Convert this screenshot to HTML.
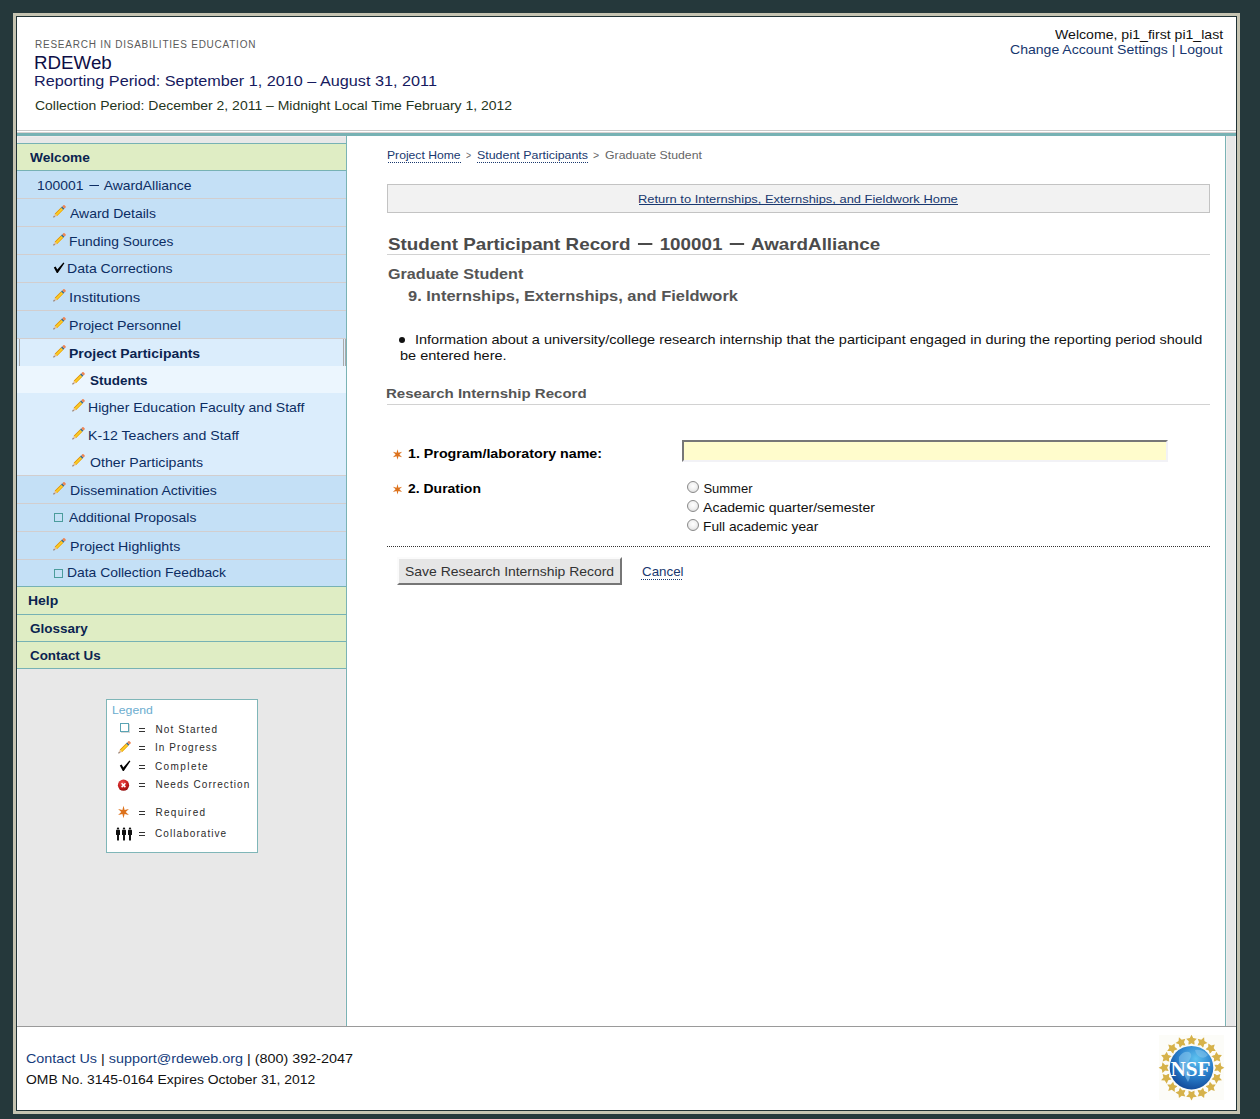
<!DOCTYPE html>
<html><head><meta charset="utf-8"><title>RDEWeb</title><style>
*{margin:0;padding:0;box-sizing:border-box}
html,body{width:1260px;height:1119px;overflow:hidden;background:#25383b;font-family:"Liberation Sans",sans-serif}
.abs{position:absolute}
.t{position:absolute;white-space:nowrap;line-height:1}
.ic{position:absolute;overflow:visible}
.md{display:inline-block;background:currentColor}
.sq{position:absolute;width:9px;height:9px;border:1px solid #4b9c9c}
</style></head>
<body>
<div class="abs" style="left:13px;top:13px;width:1227px;height:1101px;background:#c5c3b1"></div>
<div class="abs" style="left:16px;top:16px;width:1221px;height:1095px;background:#203236"></div>
<div class="abs" style="left:17px;top:17px;width:1219px;height:1093px;background:#fff"></div>
<div class="abs" style="left:17px;top:130px;width:1219px;height:1px;background:#c9c9c9"></div>
<div class="abs" style="left:17px;top:132px;width:1219px;height:1px;background:#d9d2d2"></div>
<div class="abs" style="left:17px;top:133px;width:1219px;height:3px;background:#77b2b4"></div>
<div class="abs" style="left:17px;top:136px;width:329px;height:890px;background:#e8e8e8"></div>
<div class="abs" style="left:17px;top:136px;width:1px;height:890px;background:#f3f3f3"></div>
<div class="abs" style="left:346px;top:136px;width:1px;height:890px;background:#7ab3b5"></div>
<div class="abs" style="left:345px;top:669px;width:1px;height:357px;background:#f0eaea"></div>
<div class="abs" style="left:17px;top:136px;width:329px;height:1px;background:#f1eded"></div>
<div class="abs" style="left:1225px;top:136px;width:1px;height:890px;background:#7ab3b5"></div>
<div class="abs" style="left:1226px;top:136px;width:10px;height:890px;background:#e8e8e8"></div>
<div class="abs" style="left:1226px;top:136px;width:1px;height:890px;background:#f1eeee"></div>
<div class="abs" style="left:1235px;top:136px;width:1px;height:890px;background:#f4f2f2"></div>
<div class="abs" style="left:17px;top:1026px;width:1219px;height:1px;background:#9a9a9a"></div>
<div class="abs" style="left:17px;top:143px;width:329px;height:1px;background:#77b2b4"></div>
<div class="abs" style="left:17px;top:144px;width:329px;height:26px;background:#dfedc4"></div>
<div class="abs" style="left:17px;top:170px;width:329px;height:1px;background:#77b2b4"></div>
<div class="abs" style="left:17px;top:171px;width:329px;height:415px;background:#c4e0f6"></div>
<div class="abs" style="left:17px;top:198px;width:329px;height:1px;background:#d2cece"></div>
<div class="abs" style="left:17px;top:226px;width:329px;height:1px;background:#d2cece"></div>
<div class="abs" style="left:17px;top:254px;width:329px;height:1px;background:#d2cece"></div>
<div class="abs" style="left:17px;top:282px;width:329px;height:1px;background:#d2cece"></div>
<div class="abs" style="left:17px;top:310px;width:329px;height:1px;background:#d2cece"></div>
<div class="abs" style="left:17px;top:338px;width:329px;height:1px;background:#d2cece"></div>
<div class="abs" style="left:17px;top:475px;width:329px;height:1px;background:#d2cece"></div>
<div class="abs" style="left:17px;top:503px;width:329px;height:1px;background:#d2cece"></div>
<div class="abs" style="left:17px;top:531px;width:329px;height:1px;background:#d2cece"></div>
<div class="abs" style="left:17px;top:559px;width:329px;height:1px;background:#d2cece"></div>
<div class="abs" style="left:17px;top:339px;width:329px;height:27px;background:#dbedfc"></div>
<div class="abs" style="left:17px;top:366px;width:329px;height:27px;background:#ecf6fe"></div>
<div class="abs" style="left:17px;top:393px;width:329px;height:82px;background:#dbedfc"></div>
<div class="abs" style="left:19px;top:339px;width:1px;height:27px;background:#a9a9a9"></div>
<div class="abs" style="left:343px;top:339px;width:1px;height:27px;background:#a9a9a9"></div>
<div class="abs" style="left:345px;top:339px;width:1px;height:27px;background:#a9a9a9"></div>
<div class="abs" style="left:17px;top:586px;width:329px;height:1px;background:#77b2b4"></div>
<div class="abs" style="left:17px;top:587px;width:329px;height:27px;background:#dfedc4"></div>
<div class="abs" style="left:17px;top:614px;width:329px;height:1px;background:#77b2b4"></div>
<div class="abs" style="left:17px;top:615px;width:329px;height:26px;background:#dfedc4"></div>
<div class="abs" style="left:17px;top:641px;width:329px;height:1px;background:#77b2b4"></div>
<div class="abs" style="left:17px;top:642px;width:329px;height:26px;background:#dfedc4"></div>
<div class="abs" style="left:17px;top:668px;width:329px;height:1px;background:#77b2b4"></div>
<svg class="ic" style="left:53px;top:205px" width="14" height="14" viewBox="0 0 14 14"><g transform="translate(6.5 6.3) rotate(-45)">
<polygon points="-8.6,0 -5.0,-1.6 -5.0,1.6" fill="#e3b99c"/><polygon points="-8.8,0 -7.2,-0.8 -7.2,0.8" fill="#6b5e56"/>
<rect x="-5.0" y="-1.6" width="8.8" height="3.2" fill="#fbd126"/><rect x="-5.0" y="-1.6" width="8.8" height="0.9" fill="#df8a12"/><rect x="-5.0" y="0.9" width="8.8" height="0.7" fill="#e9a01c"/>
<rect x="3.8" y="-1.6" width="1.6" height="3.2" fill="#3e6e88"/><rect x="5.4" y="-1.6" width="2.5" height="3.2" rx="0.9" fill="#ee8454"/>
</g></svg>
<svg class="ic" style="left:53px;top:233px" width="14" height="14" viewBox="0 0 14 14"><g transform="translate(6.5 6.3) rotate(-45)">
<polygon points="-8.6,0 -5.0,-1.6 -5.0,1.6" fill="#e3b99c"/><polygon points="-8.8,0 -7.2,-0.8 -7.2,0.8" fill="#6b5e56"/>
<rect x="-5.0" y="-1.6" width="8.8" height="3.2" fill="#fbd126"/><rect x="-5.0" y="-1.6" width="8.8" height="0.9" fill="#df8a12"/><rect x="-5.0" y="0.9" width="8.8" height="0.7" fill="#e9a01c"/>
<rect x="3.8" y="-1.6" width="1.6" height="3.2" fill="#3e6e88"/><rect x="5.4" y="-1.6" width="2.5" height="3.2" rx="0.9" fill="#ee8454"/>
</g></svg>
<svg class="ic" style="left:53px;top:289px" width="14" height="14" viewBox="0 0 14 14"><g transform="translate(6.5 6.3) rotate(-45)">
<polygon points="-8.6,0 -5.0,-1.6 -5.0,1.6" fill="#e3b99c"/><polygon points="-8.8,0 -7.2,-0.8 -7.2,0.8" fill="#6b5e56"/>
<rect x="-5.0" y="-1.6" width="8.8" height="3.2" fill="#fbd126"/><rect x="-5.0" y="-1.6" width="8.8" height="0.9" fill="#df8a12"/><rect x="-5.0" y="0.9" width="8.8" height="0.7" fill="#e9a01c"/>
<rect x="3.8" y="-1.6" width="1.6" height="3.2" fill="#3e6e88"/><rect x="5.4" y="-1.6" width="2.5" height="3.2" rx="0.9" fill="#ee8454"/>
</g></svg>
<svg class="ic" style="left:53px;top:317px" width="14" height="14" viewBox="0 0 14 14"><g transform="translate(6.5 6.3) rotate(-45)">
<polygon points="-8.6,0 -5.0,-1.6 -5.0,1.6" fill="#e3b99c"/><polygon points="-8.8,0 -7.2,-0.8 -7.2,0.8" fill="#6b5e56"/>
<rect x="-5.0" y="-1.6" width="8.8" height="3.2" fill="#fbd126"/><rect x="-5.0" y="-1.6" width="8.8" height="0.9" fill="#df8a12"/><rect x="-5.0" y="0.9" width="8.8" height="0.7" fill="#e9a01c"/>
<rect x="3.8" y="-1.6" width="1.6" height="3.2" fill="#3e6e88"/><rect x="5.4" y="-1.6" width="2.5" height="3.2" rx="0.9" fill="#ee8454"/>
</g></svg>
<svg class="ic" style="left:53px;top:345px" width="14" height="14" viewBox="0 0 14 14"><g transform="translate(6.5 6.3) rotate(-45)">
<polygon points="-8.6,0 -5.0,-1.6 -5.0,1.6" fill="#e3b99c"/><polygon points="-8.8,0 -7.2,-0.8 -7.2,0.8" fill="#6b5e56"/>
<rect x="-5.0" y="-1.6" width="8.8" height="3.2" fill="#fbd126"/><rect x="-5.0" y="-1.6" width="8.8" height="0.9" fill="#df8a12"/><rect x="-5.0" y="0.9" width="8.8" height="0.7" fill="#e9a01c"/>
<rect x="3.8" y="-1.6" width="1.6" height="3.2" fill="#3e6e88"/><rect x="5.4" y="-1.6" width="2.5" height="3.2" rx="0.9" fill="#ee8454"/>
</g></svg>
<svg class="ic" style="left:72px;top:372px" width="14" height="14" viewBox="0 0 14 14"><g transform="translate(6.5 6.3) rotate(-45)">
<polygon points="-8.6,0 -5.0,-1.6 -5.0,1.6" fill="#e3b99c"/><polygon points="-8.8,0 -7.2,-0.8 -7.2,0.8" fill="#6b5e56"/>
<rect x="-5.0" y="-1.6" width="8.8" height="3.2" fill="#fbd126"/><rect x="-5.0" y="-1.6" width="8.8" height="0.9" fill="#df8a12"/><rect x="-5.0" y="0.9" width="8.8" height="0.7" fill="#e9a01c"/>
<rect x="3.8" y="-1.6" width="1.6" height="3.2" fill="#3e6e88"/><rect x="5.4" y="-1.6" width="2.5" height="3.2" rx="0.9" fill="#ee8454"/>
</g></svg>
<svg class="ic" style="left:72px;top:399px" width="14" height="14" viewBox="0 0 14 14"><g transform="translate(6.5 6.3) rotate(-45)">
<polygon points="-8.6,0 -5.0,-1.6 -5.0,1.6" fill="#e3b99c"/><polygon points="-8.8,0 -7.2,-0.8 -7.2,0.8" fill="#6b5e56"/>
<rect x="-5.0" y="-1.6" width="8.8" height="3.2" fill="#fbd126"/><rect x="-5.0" y="-1.6" width="8.8" height="0.9" fill="#df8a12"/><rect x="-5.0" y="0.9" width="8.8" height="0.7" fill="#e9a01c"/>
<rect x="3.8" y="-1.6" width="1.6" height="3.2" fill="#3e6e88"/><rect x="5.4" y="-1.6" width="2.5" height="3.2" rx="0.9" fill="#ee8454"/>
</g></svg>
<svg class="ic" style="left:72px;top:427px" width="14" height="14" viewBox="0 0 14 14"><g transform="translate(6.5 6.3) rotate(-45)">
<polygon points="-8.6,0 -5.0,-1.6 -5.0,1.6" fill="#e3b99c"/><polygon points="-8.8,0 -7.2,-0.8 -7.2,0.8" fill="#6b5e56"/>
<rect x="-5.0" y="-1.6" width="8.8" height="3.2" fill="#fbd126"/><rect x="-5.0" y="-1.6" width="8.8" height="0.9" fill="#df8a12"/><rect x="-5.0" y="0.9" width="8.8" height="0.7" fill="#e9a01c"/>
<rect x="3.8" y="-1.6" width="1.6" height="3.2" fill="#3e6e88"/><rect x="5.4" y="-1.6" width="2.5" height="3.2" rx="0.9" fill="#ee8454"/>
</g></svg>
<svg class="ic" style="left:72px;top:454px" width="14" height="14" viewBox="0 0 14 14"><g transform="translate(6.5 6.3) rotate(-45)">
<polygon points="-8.6,0 -5.0,-1.6 -5.0,1.6" fill="#e3b99c"/><polygon points="-8.8,0 -7.2,-0.8 -7.2,0.8" fill="#6b5e56"/>
<rect x="-5.0" y="-1.6" width="8.8" height="3.2" fill="#fbd126"/><rect x="-5.0" y="-1.6" width="8.8" height="0.9" fill="#df8a12"/><rect x="-5.0" y="0.9" width="8.8" height="0.7" fill="#e9a01c"/>
<rect x="3.8" y="-1.6" width="1.6" height="3.2" fill="#3e6e88"/><rect x="5.4" y="-1.6" width="2.5" height="3.2" rx="0.9" fill="#ee8454"/>
</g></svg>
<svg class="ic" style="left:53px;top:482px" width="14" height="14" viewBox="0 0 14 14"><g transform="translate(6.5 6.3) rotate(-45)">
<polygon points="-8.6,0 -5.0,-1.6 -5.0,1.6" fill="#e3b99c"/><polygon points="-8.8,0 -7.2,-0.8 -7.2,0.8" fill="#6b5e56"/>
<rect x="-5.0" y="-1.6" width="8.8" height="3.2" fill="#fbd126"/><rect x="-5.0" y="-1.6" width="8.8" height="0.9" fill="#df8a12"/><rect x="-5.0" y="0.9" width="8.8" height="0.7" fill="#e9a01c"/>
<rect x="3.8" y="-1.6" width="1.6" height="3.2" fill="#3e6e88"/><rect x="5.4" y="-1.6" width="2.5" height="3.2" rx="0.9" fill="#ee8454"/>
</g></svg>
<svg class="ic" style="left:53px;top:538px" width="14" height="14" viewBox="0 0 14 14"><g transform="translate(6.5 6.3) rotate(-45)">
<polygon points="-8.6,0 -5.0,-1.6 -5.0,1.6" fill="#e3b99c"/><polygon points="-8.8,0 -7.2,-0.8 -7.2,0.8" fill="#6b5e56"/>
<rect x="-5.0" y="-1.6" width="8.8" height="3.2" fill="#fbd126"/><rect x="-5.0" y="-1.6" width="8.8" height="0.9" fill="#df8a12"/><rect x="-5.0" y="0.9" width="8.8" height="0.7" fill="#e9a01c"/>
<rect x="3.8" y="-1.6" width="1.6" height="3.2" fill="#3e6e88"/><rect x="5.4" y="-1.6" width="2.5" height="3.2" rx="0.9" fill="#ee8454"/>
</g></svg>
<svg class="ic" style="left:53px;top:262px" width="12" height="12" viewBox="0 0 12 12"><polygon points="0.8,5.4 2.6,4.4 4.3,7.4 10.4,0.6 11.4,1.2 4.8,11 3.8,11" fill="#000"/></svg>
<div class="sq" style="left:54px;top:513px"></div>
<div class="sq" style="left:54px;top:569px"></div>
<div class="abs" style="left:106px;top:699px;width:152px;height:154px;background:#fff;border:1px solid #7fb6b8"></div>
<div class="abs" style="left:121px;top:724px;width:9px;height:9px;background:#d8d8d8"></div>
<div class="sq" style="left:120px;top:723px;background:#fff;border-color:#5aa4b4"></div>
<svg class="ic" style="left:118px;top:741px" width="14" height="14" viewBox="0 0 14 14"><g transform="translate(6.5 6.3) rotate(-45)">
<polygon points="-8.6,0 -5.0,-1.6 -5.0,1.6" fill="#e3b99c"/><polygon points="-8.8,0 -7.2,-0.8 -7.2,0.8" fill="#6b5e56"/>
<rect x="-5.0" y="-1.6" width="8.8" height="3.2" fill="#fbd126"/><rect x="-5.0" y="-1.6" width="8.8" height="0.9" fill="#df8a12"/><rect x="-5.0" y="0.9" width="8.8" height="0.7" fill="#e9a01c"/>
<rect x="3.8" y="-1.6" width="1.6" height="3.2" fill="#3e6e88"/><rect x="5.4" y="-1.6" width="2.5" height="3.2" rx="0.9" fill="#ee8454"/>
</g></svg>
<svg class="ic" style="left:119px;top:760px" width="12" height="12" viewBox="0 0 12 12"><polygon points="0.8,5.4 2.6,4.4 4.3,7.4 10.4,0.6 11.4,1.2 4.8,11 3.8,11" fill="#000"/></svg>
<svg class="ic" style="left:117px;top:779px" width="13" height="13" viewBox="0 0 13 13"><defs><radialGradient id="rg" cx="0.4" cy="0.3" r="0.8"><stop offset="0" stop-color="#f05050"/><stop offset="0.6" stop-color="#c01818"/><stop offset="1" stop-color="#801010"/></radialGradient></defs><circle cx="6.5" cy="6.2" r="5.6" fill="url(#rg)"/><path d="M4.6 4.3 L8.4 8.1 M8.4 4.3 L4.6 8.1" stroke="#fff" stroke-width="1.5"/></svg>
<svg class="ic" style="left:0;top:0" width="300" height="900"><polygon points="123.50,805.80 122.38,810.07 118.13,808.90 121.27,812.00 118.13,815.10 122.38,813.93 123.50,818.20 124.62,813.93 128.87,815.10 125.73,812.00 128.87,808.90 124.62,810.07" fill="#dd721c"/></svg>
<svg class="ic" style="left:0;top:0" width="300" height="900"><ellipse cx="118" cy="828.6" rx="1.2" ry="1.0" fill="#111"/><rect x="116" y="829.8" width="4" height="5.2" rx="0.5" fill="#111"/><rect x="117" y="834.5" width="2" height="6" rx="0.6" fill="#161616"/><ellipse cx="124" cy="828.6" rx="1.2" ry="1.0" fill="#111"/><rect x="122" y="829.8" width="4" height="5.2" rx="0.5" fill="#111"/><rect x="123" y="834.5" width="2" height="6" rx="0.6" fill="#161616"/><ellipse cx="130" cy="828.6" rx="1.2" ry="1.0" fill="#111"/><rect x="128" y="829.8" width="4" height="5.2" rx="0.5" fill="#111"/><rect x="129" y="834.5" width="2" height="6" rx="0.6" fill="#161616"/></svg>
<div class="abs" style="left:139px;top:728px;width:6px;height:1px;background:#333"></div>
<div class="abs" style="left:139px;top:731px;width:6px;height:1px;background:#333"></div>
<div class="abs" style="left:139px;top:746px;width:6px;height:1px;background:#333"></div>
<div class="abs" style="left:139px;top:749px;width:6px;height:1px;background:#333"></div>
<div class="abs" style="left:139px;top:765px;width:6px;height:1px;background:#333"></div>
<div class="abs" style="left:139px;top:768px;width:6px;height:1px;background:#333"></div>
<div class="abs" style="left:139px;top:783px;width:6px;height:1px;background:#333"></div>
<div class="abs" style="left:139px;top:786px;width:6px;height:1px;background:#333"></div>
<div class="abs" style="left:139px;top:811px;width:6px;height:1px;background:#333"></div>
<div class="abs" style="left:139px;top:814px;width:6px;height:1px;background:#333"></div>
<div class="abs" style="left:139px;top:832px;width:6px;height:1px;background:#333"></div>
<div class="abs" style="left:139px;top:835px;width:6px;height:1px;background:#333"></div>
<div class="abs" style="left:387px;top:184px;width:823px;height:29px;background:#f2f2f2;border:1px solid #c3c3c3"></div>
<div class="abs" style="left:639px;top:204px;width:319px;height:1px;background:#19386f"></div>
<div class="abs" style="left:388px;top:162px;width:73px;height:1px;border-bottom:1px dotted #19386f"></div>
<div class="abs" style="left:477px;top:162px;width:111px;height:1px;border-bottom:1px dotted #19386f"></div>
<div class="abs" style="left:387px;top:254px;width:823px;height:1px;background:#d2d2d2"></div>
<div class="abs" style="left:399px;top:337px;width:6px;height:6px;border-radius:50%;background:#111"></div>
<div class="abs" style="left:387px;top:404px;width:823px;height:1px;background:#d2d2d2"></div>
<svg class="ic" style="left:0;top:0" width="1260" height="1119"><polygon points="397.50,449.20 396.55,452.85 392.91,451.85 395.59,454.50 392.91,457.15 396.55,456.15 397.50,459.80 398.45,456.15 402.09,457.15 399.41,454.50 402.09,451.85 398.45,452.85" fill="#dd721c"/><polygon points="397.50,484.00 396.55,487.65 392.91,486.65 395.59,489.30 392.91,491.95 396.55,490.95 397.50,494.60 398.45,490.95 402.09,491.95 399.41,489.30 402.09,486.65 398.45,487.65" fill="#dd721c"/></svg>
<div class="abs" style="left:682px;top:440px;width:486px;height:22px;background:#fffccc;border-style:solid;border-width:2px;border-color:#777 #f2f2f6 #f2f2f6 #777"></div>
<div class="abs" style="left:687px;top:481px;width:12px;height:12px;border-radius:50%;border:1px solid #8a8a8a;background:radial-gradient(circle at 50% 40%, #ffffff 0%, #f0f0f0 50%, #d0d0d0 100%)"></div>
<div class="abs" style="left:687px;top:500px;width:12px;height:12px;border-radius:50%;border:1px solid #8a8a8a;background:radial-gradient(circle at 50% 40%, #ffffff 0%, #f0f0f0 50%, #d0d0d0 100%)"></div>
<div class="abs" style="left:687px;top:519px;width:12px;height:12px;border-radius:50%;border:1px solid #8a8a8a;background:radial-gradient(circle at 50% 40%, #ffffff 0%, #f0f0f0 50%, #d0d0d0 100%)"></div>
<div class="abs" style="left:387px;top:546px;width:823px;height:1px;background:repeating-linear-gradient(90deg,#333 0 1px,transparent 1px 2px)"></div>
<div class="abs" style="left:397px;top:557px;width:225px;height:28px;background:#e6e6e6;border-style:solid;border-width:2px;border-color:#fbfbfb #767676 #767676 #fbfbfb"></div>
<div class="abs" style="left:641px;top:579px;width:42px;height:1px;background:repeating-linear-gradient(90deg,#19386f 0 1px,transparent 1px 2px)"></div>
<svg class="ic" style="left:1159px;top:1035px" width="65" height="65" viewBox="0 0 65 65"><rect width="65" height="65" fill="#fcfcf8"/><defs><radialGradient id="gl" cx="0.6" cy="0.3" r="0.8"><stop offset="0" stop-color="#5ec2f0"/><stop offset="0.5" stop-color="#2a80cc"/><stop offset="1" stop-color="#0d3d8e"/></radialGradient></defs><polygon points="32.50,-0.20 34.20,3.05 37.83,3.67 35.26,6.30 35.79,9.93 32.50,8.30 29.21,9.93 29.74,6.30 27.17,3.67 30.80,3.05" fill="#d6b24a"/><polygon points="45.09,2.30 45.42,5.96 48.53,7.92 45.15,9.36 44.25,12.92 41.84,10.16 38.17,10.40 40.06,7.25 38.69,3.84 42.27,4.66" fill="#d6b24a"/><polygon points="55.76,9.44 54.67,12.94 56.79,15.94 53.12,15.98 50.93,18.93 49.75,15.45 46.27,14.27 49.22,12.08 49.26,8.41 52.26,10.53" fill="#d6b24a"/><polygon points="62.90,20.11 60.54,22.93 61.36,26.51 57.95,25.14 54.80,27.03 55.04,23.36 52.28,20.95 55.84,20.05 57.28,16.67 59.24,19.78" fill="#d6b24a"/><polygon points="65.40,32.70 62.15,34.40 61.53,38.03 58.90,35.46 55.27,35.99 56.90,32.70 55.27,29.41 58.90,29.94 61.53,27.37 62.15,31.00" fill="#d6b24a"/><polygon points="62.90,45.29 59.24,45.62 57.28,48.73 55.84,45.35 52.28,44.45 55.04,42.04 54.80,38.37 57.95,40.26 61.36,38.89 60.54,42.47" fill="#d6b24a"/><polygon points="55.76,55.96 52.26,54.87 49.26,56.99 49.22,53.32 46.27,51.13 49.75,49.95 50.93,46.47 53.12,49.42 56.79,49.46 54.67,52.46" fill="#d6b24a"/><polygon points="45.09,63.10 42.27,60.74 38.69,61.56 40.06,58.15 38.17,55.00 41.84,55.24 44.25,52.48 45.15,56.04 48.53,57.48 45.42,59.44" fill="#d6b24a"/><polygon points="32.50,65.60 30.80,62.35 27.17,61.73 29.74,59.10 29.21,55.47 32.50,57.10 35.79,55.47 35.26,59.10 37.83,61.73 34.20,62.35" fill="#d6b24a"/><polygon points="19.91,63.10 19.58,59.44 16.47,57.48 19.85,56.04 20.75,52.48 23.16,55.24 26.83,55.00 24.94,58.15 26.31,61.56 22.73,60.74" fill="#d6b24a"/><polygon points="9.24,55.96 10.33,52.46 8.21,49.46 11.88,49.42 14.07,46.47 15.25,49.95 18.73,51.13 15.78,53.32 15.74,56.99 12.74,54.87" fill="#d6b24a"/><polygon points="2.10,45.29 4.46,42.47 3.64,38.89 7.05,40.26 10.20,38.37 9.96,42.04 12.72,44.45 9.16,45.35 7.72,48.73 5.76,45.62" fill="#d6b24a"/><polygon points="-0.40,32.70 2.85,31.00 3.47,27.37 6.10,29.94 9.73,29.41 8.10,32.70 9.73,35.99 6.10,35.46 3.47,38.03 2.85,34.40" fill="#d6b24a"/><polygon points="2.10,20.11 5.76,19.78 7.72,16.67 9.16,20.05 12.72,20.95 9.96,23.36 10.20,27.03 7.05,25.14 3.64,26.51 4.46,22.93" fill="#d6b24a"/><polygon points="9.24,9.44 12.74,10.53 15.74,8.41 15.78,12.08 18.73,14.27 15.25,15.45 14.07,18.93 11.88,15.98 8.21,15.94 10.33,12.94" fill="#d6b24a"/><polygon points="19.91,2.30 22.73,4.66 26.31,3.84 24.94,7.25 26.83,10.40 23.16,10.16 20.75,12.92 19.85,9.36 16.47,7.92 19.58,5.96" fill="#d6b24a"/><circle cx="37.10" cy="9.55" r="1.6" fill="#fcfcf8"/><circle cx="45.61" cy="13.08" r="1.6" fill="#fcfcf8"/><circle cx="52.12" cy="19.59" r="1.6" fill="#fcfcf8"/><circle cx="55.65" cy="28.10" r="1.6" fill="#fcfcf8"/><circle cx="55.65" cy="37.30" r="1.6" fill="#fcfcf8"/><circle cx="52.12" cy="45.81" r="1.6" fill="#fcfcf8"/><circle cx="45.61" cy="52.32" r="1.6" fill="#fcfcf8"/><circle cx="37.10" cy="55.85" r="1.6" fill="#fcfcf8"/><circle cx="27.90" cy="55.85" r="1.6" fill="#fcfcf8"/><circle cx="19.39" cy="52.32" r="1.6" fill="#fcfcf8"/><circle cx="12.88" cy="45.81" r="1.6" fill="#fcfcf8"/><circle cx="9.35" cy="37.30" r="1.6" fill="#fcfcf8"/><circle cx="9.35" cy="28.10" r="1.6" fill="#fcfcf8"/><circle cx="12.88" cy="19.59" r="1.6" fill="#fcfcf8"/><circle cx="19.39" cy="13.08" r="1.6" fill="#fcfcf8"/><circle cx="27.90" cy="9.55" r="1.6" fill="#fcfcf8"/><circle cx="32.5" cy="32.7" r="22.6" fill="#fcfcf8"/><circle cx="32.5" cy="32.7" r="21.8" fill="url(#gl)"/><path d="M20 22 Q24 16 30 17 Q34 19 31 24 Q28 28 30 33 Q33 40 29 47 Q26 42 24 36 Q19 31 20 22 Z" fill="#8cc8ee" opacity="0.55"/><path d="M36 15 Q44 14 49 20 Q46 24 41 22 Q37 20 36 15 Z" fill="#8cc8ee" opacity="0.5"/><text x="31.5" y="40.7" text-anchor="middle" font-family="Liberation Serif" font-weight="700" font-size="21" fill="#fff" textLength="40" lengthAdjust="spacingAndGlyphs">NSF</text></svg>
<div class="t" id="h1" style="left:35.00px;top:39.53px;font-size:10px;font-weight:400;color:#5a5a5a;letter-spacing:0.758px;transform:scaleX(1.0000);transform-origin:0 0;">RESEARCH IN DISABILITIES EDUCATION</div>
<div class="t" id="h2" style="left:34.00px;top:53.76px;font-size:18px;font-weight:400;color:#0e0e46;letter-spacing:0.000px;transform:scaleX(1.0410);transform-origin:0 0;">RDEWeb</div>
<div class="t" id="h3" style="left:34.00px;top:74.15px;font-size:14px;font-weight:400;color:#161a5e;letter-spacing:0.000px;transform:scaleX(1.1590);transform-origin:0 0;">Reporting Period: September 1, 2010 &ndash; August 31, 2011</div>
<div class="t" id="h4" style="left:35.00px;top:100.42px;font-size:12.5px;font-weight:400;color:#1f3520;letter-spacing:0.000px;transform:scaleX(1.1170);transform-origin:0 0;">Collection Period: December 2, 2011 &ndash; Midnight Local Time February 1, 2012</div>
<div class="t" id="hr1" style="left:1055.00px;top:28.00px;font-size:13px;font-weight:400;color:#111;letter-spacing:0.000px;transform:scaleX(1.0840);transform-origin:0 0;">Welcome, pi1_first pi1_last</div>
<div class="t" id="hr2" style="left:1010.00px;top:43.00px;font-size:13px;font-weight:400;color:#16366e;letter-spacing:0.000px;transform:scaleX(1.0810);transform-origin:0 0;"><span style="color:#16366e">Change Account Settings</span> <span style="color:#16366e">|</span> <span style="color:#16366e">Logout</span></div>
<div class="t" id="s0" style="left:30.00px;top:151.00px;font-size:13px;font-weight:700;color:#0b2450;letter-spacing:0.000px;transform:scaleX(1.0530);transform-origin:0 0;">Welcome</div>
<div class="t" id="s1" style="left:37.00px;top:179.00px;font-size:13px;font-weight:400;color:#0c2d63;letter-spacing:0.000px;transform:scaleX(1.0690);transform-origin:0 0;">100001 <span class="md" style="width:9.5px;height:1px;margin:0 1.5px;vertical-align:4px"></span> AwardAlliance</div>
<div class="t" id="s2" style="left:70.00px;top:207.00px;font-size:13px;font-weight:400;color:#0c2d63;letter-spacing:0.000px;transform:scaleX(1.0750);transform-origin:0 0;">Award Details</div>
<div class="t" id="s3" style="left:69.00px;top:235.00px;font-size:13px;font-weight:400;color:#0c2d63;letter-spacing:0.000px;transform:scaleX(1.0620);transform-origin:0 0;">Funding Sources</div>
<div class="t" id="s4" style="left:67.00px;top:262.00px;font-size:13px;font-weight:400;color:#0c2d63;letter-spacing:0.000px;transform:scaleX(1.0818);transform-origin:0 0;">Data Corrections</div>
<div class="t" id="s5" style="left:69.00px;top:291.00px;font-size:13px;font-weight:400;color:#0c2d63;letter-spacing:0.000px;transform:scaleX(1.1462);transform-origin:0 0;">Institutions</div>
<div class="t" id="s6" style="left:69.00px;top:319.00px;font-size:13px;font-weight:400;color:#0c2d63;letter-spacing:0.000px;transform:scaleX(1.0894);transform-origin:0 0;">Project Personnel</div>
<div class="t" id="s7" style="left:69.00px;top:347.00px;font-size:13px;font-weight:700;color:#0b2450;letter-spacing:0.000px;transform:scaleX(1.0740);transform-origin:0 0;">Project Participants</div>
<div class="t" id="s8" style="left:89.50px;top:374.00px;font-size:13px;font-weight:700;color:#0b2450;letter-spacing:0.000px;transform:scaleX(1.0360);transform-origin:0 0;">Students</div>
<div class="t" id="s9" style="left:88.00px;top:401.00px;font-size:13px;font-weight:400;color:#0c2d63;letter-spacing:0.000px;transform:scaleX(1.0785);transform-origin:0 0;">Higher Education Faculty and Staff</div>
<div class="t" id="s10" style="left:88.00px;top:429.00px;font-size:13px;font-weight:400;color:#0c2d63;letter-spacing:0.000px;transform:scaleX(1.0866);transform-origin:0 0;">K-12 Teachers and Staff</div>
<div class="t" id="s11" style="left:89.50px;top:456.00px;font-size:13px;font-weight:400;color:#0c2d63;letter-spacing:0.000px;transform:scaleX(1.0870);transform-origin:0 0;">Other Participants</div>
<div class="t" id="s12" style="left:70.30px;top:484.00px;font-size:13px;font-weight:400;color:#0c2d63;letter-spacing:0.000px;transform:scaleX(1.0814);transform-origin:0 0;">Dissemination Activities</div>
<div class="t" id="s13" style="left:68.50px;top:511.00px;font-size:13px;font-weight:400;color:#0c2d63;letter-spacing:0.000px;transform:scaleX(1.0750);transform-origin:0 0;">Additional Proposals</div>
<div class="t" id="s14" style="left:70.30px;top:540.00px;font-size:13px;font-weight:400;color:#0c2d63;letter-spacing:0.000px;transform:scaleX(1.0900);transform-origin:0 0;">Project Highlights</div>
<div class="t" id="s15" style="left:67.00px;top:566.00px;font-size:13px;font-weight:400;color:#0c2d63;letter-spacing:0.000px;transform:scaleX(1.0680);transform-origin:0 0;">Data Collection Feedback</div>
<div class="t" id="s16" style="left:28.20px;top:594.00px;font-size:13px;font-weight:700;color:#0b2450;letter-spacing:0.000px;transform:scaleX(1.0737);transform-origin:0 0;">Help</div>
<div class="t" id="s17" style="left:29.60px;top:622.00px;font-size:13px;font-weight:700;color:#0b2450;letter-spacing:0.000px;transform:scaleX(1.0366);transform-origin:0 0;">Glossary</div>
<div class="t" id="s18" style="left:29.60px;top:649.00px;font-size:13px;font-weight:700;color:#0b2450;letter-spacing:0.000px;transform:scaleX(1.0292);transform-origin:0 0;">Contact Us</div>
<div class="t" id="l0" style="left:112.00px;top:704.69px;font-size:11px;font-weight:400;color:#6badcf;letter-spacing:0.000px;transform:scaleX(1.1112);transform-origin:0 0;">Legend</div>
<div class="t" id="l1" style="left:155.50px;top:724.53px;font-size:10px;font-weight:400;color:#2a2a2a;letter-spacing:1.100px;transform:scaleX(1.0000);transform-origin:0 0;">Not Started</div>
<div class="t" id="l2" style="left:155.00px;top:742.53px;font-size:10px;font-weight:400;color:#2a2a2a;letter-spacing:1.070px;transform:scaleX(1.0000);transform-origin:0 0;">In Progress</div>
<div class="t" id="l3" style="left:155.00px;top:761.53px;font-size:10px;font-weight:400;color:#2a2a2a;letter-spacing:1.403px;transform:scaleX(1.0000);transform-origin:0 0;">Complete</div>
<div class="t" id="l4" style="left:155.40px;top:779.53px;font-size:10px;font-weight:400;color:#2a2a2a;letter-spacing:1.071px;transform:scaleX(1.0000);transform-origin:0 0;">Needs Correction</div>
<div class="t" id="l5" style="left:155.40px;top:807.53px;font-size:10px;font-weight:400;color:#2a2a2a;letter-spacing:1.311px;transform:scaleX(1.0000);transform-origin:0 0;">Required</div>
<div class="t" id="l6" style="left:155.00px;top:828.53px;font-size:10px;font-weight:400;color:#2a2a2a;letter-spacing:1.068px;transform:scaleX(1.0000);transform-origin:0 0;">Collaborative</div>
<div class="t" id="c0" style="left:387.00px;top:150.11px;font-size:10.5px;font-weight:400;color:#19386f;letter-spacing:0.000px;transform:scaleX(1.1570);transform-origin:0 0;">Project Home</div>
<div class="t" id="c0a" style="left:466.00px;top:150.11px;font-size:10.5px;font-weight:400;color:#666;letter-spacing:0.000px;transform:scaleX(0.8333);transform-origin:0 0;">&gt;</div>
<div class="t" id="c1" style="left:477.00px;top:150.11px;font-size:10.5px;font-weight:400;color:#19386f;letter-spacing:0.000px;transform:scaleX(1.1813);transform-origin:0 0;">Student Participants</div>
<div class="t" id="c1a" style="left:593.00px;top:150.11px;font-size:10.5px;font-weight:400;color:#666;letter-spacing:0.000px;transform:scaleX(1.0000);transform-origin:0 0;">&gt;</div>
<div class="t" id="c2" style="left:604.50px;top:150.11px;font-size:10.5px;font-weight:400;color:#666;letter-spacing:0.000px;transform:scaleX(1.1690);transform-origin:0 0;">Graduate Student</div>
<div class="t" id="c3" style="left:638.00px;top:193.69px;font-size:11px;font-weight:400;color:#19386f;letter-spacing:0.000px;transform:scaleX(1.1728);transform-origin:0 0;">Return to Internships, Externships, and Fieldwork Home</div>
<div class="t" id="c4" style="left:388.00px;top:235.61px;font-size:17px;font-weight:700;color:#4b4b4b;letter-spacing:0.000px;transform:scaleX(1.1060);transform-origin:0 0;">Student Participant Record <span class="md" style="width:13px;height:2px;margin:0 2px;vertical-align:5px"></span> 100001 <span class="md" style="width:13px;height:2px;margin:0 2px;vertical-align:5px"></span> AwardAlliance</div>
<div class="t" id="c5" style="left:388.00px;top:267.15px;font-size:14px;font-weight:700;color:#555;letter-spacing:0.000px;transform:scaleX(1.1517);transform-origin:0 0;">Graduate Student</div>
<div class="t" id="c6" style="left:408.00px;top:289.15px;font-size:14px;font-weight:700;color:#555;letter-spacing:0.000px;transform:scaleX(1.1748);transform-origin:0 0;">9. Internships, Externships, and Fieldwork</div>
<div class="t" id="c7" style="left:415.40px;top:333.00px;font-size:13px;font-weight:400;color:#111;letter-spacing:0.000px;transform:scaleX(1.1150);transform-origin:0 0;">Information about a university/college research internship that the participant engaged in during the reporting period should</div>
<div class="t" id="c8" style="left:399.50px;top:349.00px;font-size:13px;font-weight:400;color:#111;letter-spacing:0.000px;transform:scaleX(1.1173);transform-origin:0 0;">be entered here.</div>
<div class="t" id="c9" style="left:386.00px;top:387.00px;font-size:13px;font-weight:700;color:#555;letter-spacing:0.000px;transform:scaleX(1.1570);transform-origin:0 0;">Research Internship Record</div>
<div class="t" id="c10" style="left:408.40px;top:447.00px;font-size:13px;font-weight:700;color:#000;letter-spacing:0.000px;transform:scaleX(1.0963);transform-origin:0 0;">1. Program/laboratory name:</div>
<div class="t" id="c11" style="left:408.10px;top:482.00px;font-size:13px;font-weight:700;color:#000;letter-spacing:0.000px;transform:scaleX(1.0741);transform-origin:0 0;">2. Duration</div>
<div class="t" id="c12" style="left:703.40px;top:482.00px;font-size:13px;font-weight:400;color:#111;letter-spacing:0.000px;transform:scaleX(1.0000);transform-origin:0 0;">Summer</div>
<div class="t" id="c13" style="left:703.40px;top:501.00px;font-size:13px;font-weight:400;color:#111;letter-spacing:0.000px;transform:scaleX(1.0815);transform-origin:0 0;">Academic quarter/semester</div>
<div class="t" id="c14" style="left:703.40px;top:520.00px;font-size:13px;font-weight:400;color:#111;letter-spacing:0.000px;transform:scaleX(1.0562);transform-origin:0 0;">Full academic year</div>
<div class="t" id="c15" style="left:405.40px;top:565.00px;font-size:13px;font-weight:400;color:#333;letter-spacing:0.000px;transform:scaleX(1.0718);transform-origin:0 0;">Save Research Internship Record</div>
<div class="t" id="c16" style="left:641.70px;top:565.00px;font-size:13px;font-weight:400;color:#19386f;letter-spacing:0.000px;transform:scaleX(1.0264);transform-origin:0 0;">Cancel</div>
<div class="t" id="f0" style="left:25.60px;top:1052.00px;font-size:13px;font-weight:400;color:#111;letter-spacing:0.000px;transform:scaleX(1.1046);transform-origin:0 0;"><span style="color:#163c7c">Contact Us</span> | <span style="color:#163c7c">support@rdeweb.org</span> | (800) 392-2047</div>
<div class="t" id="f1" style="left:25.60px;top:1073.00px;font-size:13px;font-weight:400;color:#111;letter-spacing:0.000px;transform:scaleX(1.0701);transform-origin:0 0;">OMB No. 3145-0164 Expires October 31, 2012</div>
</body></html>
